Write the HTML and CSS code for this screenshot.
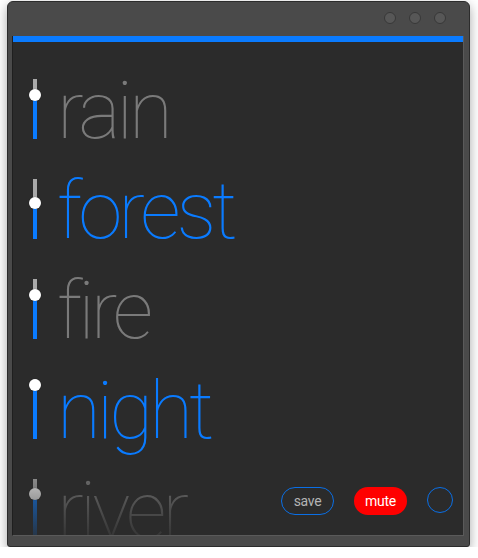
FILE: index.html
```html
<!DOCTYPE html>
<html>
<head>
<meta charset="utf-8">
<link rel="stylesheet" href="styles.css">
</head>
<body>
<div class="window">
  <div class="titlebar">
    <span class="light"></span>
    <span class="light"></span>
    <span class="light"></span>
  </div>
  <div class="panel">
    <div class="accent"></div>
    <div class="list">
      <div class="row">
        <div class="slider" style="--pos:16px"><span class="knob"></span></div>
        <span class="label">rain</span>
      </div>
      <div class="row on">
        <div class="slider" style="--pos:24px"><span class="knob"></span></div>
        <span class="label">forest</span>
      </div>
      <div class="row">
        <div class="slider" style="--pos:16px"><span class="knob"></span></div>
        <span class="label">fire</span>
      </div>
      <div class="row on">
        <div class="slider" style="--pos:6px"><span class="knob"></span></div>
        <span class="label">night</span>
      </div>
      <div class="row">
        <div class="slider" style="--pos:15px"><span class="knob"></span></div>
        <span class="label">river</span>
      </div>
    </div>
    <div class="fade"></div>
    <div class="controls">
      <button class="btn save">save</button>
      <button class="btn mute">mute</button>
      <button class="circle"></button>
    </div>
  </div>
</div>
</body>
</html>
```

FILE: styles.css
```css
html, body {
  margin: 0;
  padding: 0;
  background: #ffffff;
  font-family: Roboto, "Liberation Sans", sans-serif;
}

.window {
  box-sizing: border-box;
  margin: 1px 0 0 7px;
  width: 463px;
  height: 546px;
  background: #4a4a4a;
  border: 1px solid #2c2c2c;
  border-radius: 6px 6px 3px 3px;
  padding: 0 5px 10px 4px;
  display: flex;
  flex-direction: column;
  box-shadow: 0 4px 12px rgba(0, 0, 0, 0.35);
}

.titlebar {
  height: 34px;
  flex: none;
  display: flex;
  justify-content: flex-end;
  align-items: flex-start;
  gap: 13px;
  padding: 10px 18px 0 0;
  box-sizing: border-box;
}

.light {
  width: 12px;
  height: 12px;
  box-sizing: border-box;
  border-radius: 50%;
  background: #575757;
  border: 1px solid #383838;
}

.panel {
  flex: 1;
  position: relative;
  overflow: hidden;
  background: #2b2b2b;
  border: 1px solid #1f1f1f;
  border-right-color: #5a5a5a;
  border-bottom-color: #5a5a5a;
  border-top: none;
  display: flex;
  flex-direction: column;
}

.accent {
  height: 6px;
  flex: none;
  background: #0a7bff;
}

.list {
  padding: 37px 0 0 16px;
  display: flex;
  flex-direction: column;
  gap: 40px;
}

.row {
  height: 60px;
  flex: none;
  display: flex;
  align-items: flex-start;
  gap: 16px;
}

.slider {
  position: relative;
  width: 12px;
  height: 60px;
  flex: none;
  background:
    linear-gradient(to bottom, #a9a9a9 0, #a9a9a9 var(--pos), #0a7bff var(--pos), #0a7bff 100%) center / 4px 100% no-repeat;
  border-radius: 2px;
}

.knob {
  position: absolute;
  left: 0;
  top: calc(var(--pos) - 6px);
  width: 12px;
  height: 12px;
  border-radius: 50%;
  background: #ffffff;
  box-shadow: 0 0 1px rgba(0, 0, 0, 0.5);
}

.label {
  font-family: Roboto, "Liberation Sans", sans-serif;
  font-weight: 100;
  font-size: 80px;
  line-height: 65px;
  letter-spacing: -4px;
  color: #7a7a7a;
  white-space: nowrap;
}

.row.on .label {
  color: #0a7bff;
}

.fade {
  position: absolute;
  left: 0;
  right: 0;
  bottom: 0;
  height: 80px;
  background: linear-gradient(to bottom, rgba(43, 43, 43, 0), rgba(43, 43, 43, 0.85));
  pointer-events: none;
}

.controls {
  position: absolute;
  right: 10px;
  bottom: 20px;
  display: flex;
  align-items: center;
  gap: 20px;
}

.btn {
  box-sizing: border-box;
  width: 53px;
  height: 28px;
  border-radius: 14px;
  font-family: Roboto, "Liberation Sans", sans-serif;
  font-size: 14px;
  font-weight: 400;
  letter-spacing: -0.3px;
  padding: 0;
  cursor: pointer;
}

.save {
  background: transparent;
  border: 1px solid #0a6fe6;
  color: #b4b4b4;
}

.mute {
  background: #ff0000;
  border: none;
  color: #ffffff;
}

.circle {
  box-sizing: border-box;
  width: 26px;
  height: 26px;
  border-radius: 50%;
  background: transparent;
  border: 1px solid #0a6fe6;
  padding: 0;
  margin-top: -2px;
}
```
